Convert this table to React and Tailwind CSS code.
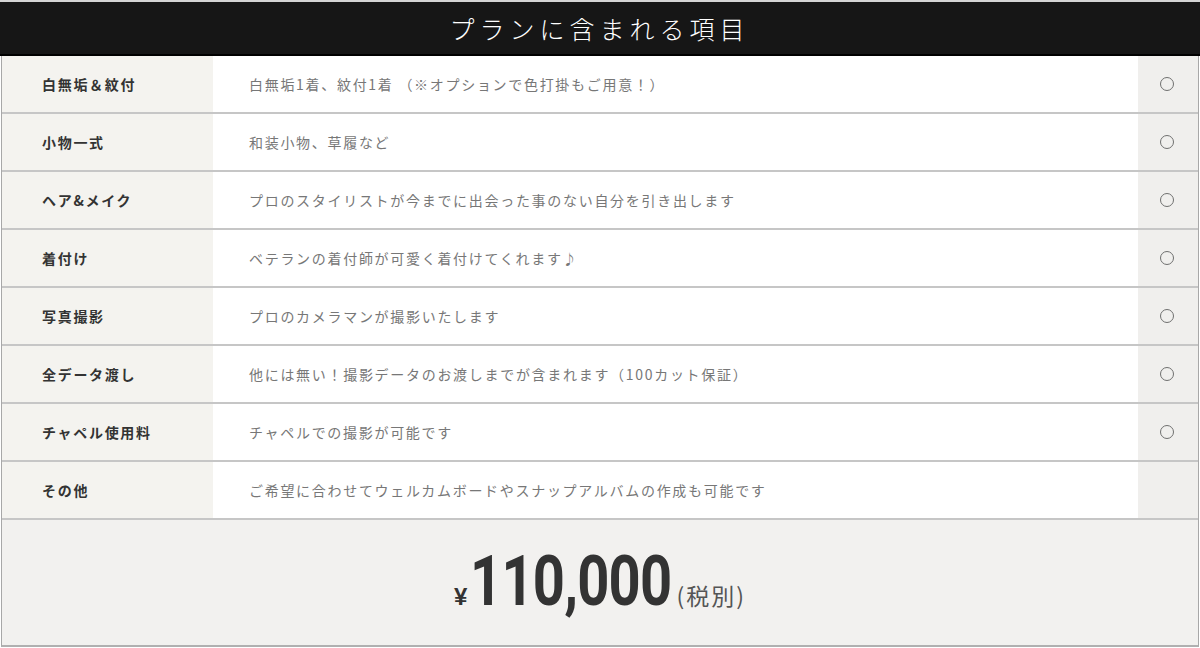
import React from "react";

const rows = [
  ["白無垢＆紋付", "白無垢1着、紋付1着 （※オプションで色打掛もご用意！）", true],
  ["小物一式", "和装小物、草履など", true],
  ["ヘア&メイク", "プロのスタイリストが今までに出会った事のない自分を引き出します", true],
  ["着付け", "ベテランの着付師が可愛く着付けてくれます♪", true],
  ["写真撮影", "プロのカメラマンが撮影いたします", true],
  ["全データ渡し", "他には無い！撮影データのお渡しまでが含まれます（100カット保証）", true],
  ["チャペル使用料", "チャペルでの撮影が可能です", true],
  ["その他", "ご希望に合わせてウェルカムボードやスナップアルバムの作成も可能です", false],
];

export default function App() {
  return (
    <div
      className="w-[1200px] h-[648px] bg-white"
      style={{ fontFamily: '"Noto Sans CJK JP", "Noto Sans", sans-serif' }}
    >
      <div className="h-[56px] border-t-2 border-[#d4d4d4] border-b-2 border-b-black bg-[#161616] flex items-center justify-center">
        <h2 className="text-white text-[25px] font-light tracking-[5px] leading-none pr-[1px]">
          プランに含まれる項目
        </h2>
      </div>
      <div className="ml-[1px] w-[1198px] border-x border-[#a8a8a8] border-b-2 border-b-[#b0b0b0]">
        {rows.map(([label, desc, mark], i) => (
          <div
            key={i}
            className="flex h-[58px] border-b-2 border-[#c6c6c6]"
          >
            <div className="w-[211px] bg-[#f4f3ef] flex items-center pl-[40px] text-[14px] font-bold text-[#333] tracking-[1.7px]">
              {label}
            </div>
            <div className="flex-1 bg-white flex items-center pl-[36px] text-[14px] text-[#777] tracking-[1.7px]">
              {desc}
            </div>
            <div className="w-[60px] bg-[#f0efed] flex items-center justify-center pr-[2px]">
              {mark && (
                <span className="block w-[14px] h-[14px] rounded-full border border-[#6f6f6f]" />
              )}
            </div>
          </div>
        ))}
        <div className="h-[125px] bg-[#f2f1ef] flex items-center justify-center pb-[4px]">
          <div className="flex items-baseline text-[#333]">
            <span
              className="text-[24px] font-bold mr-[3px]"
              style={{ fontFamily: '"Liberation Sans", sans-serif' }}
            >
              ¥
            </span>
            <span className="inline-block w-[202px] whitespace-nowrap">
              <span
                className="inline-block origin-left scale-x-[0.79] text-[71px] font-bold leading-none tracking-[-1px]"
                style={{ fontFamily: 'Roboto, "Liberation Sans", sans-serif' }}
              >
                110,000
              </span>
            </span>
            <span className="text-[23px] text-[#555] ml-[4px] tracking-[2px]">(税別)</span>
          </div>
        </div>
      </div>
    </div>
  );
}
